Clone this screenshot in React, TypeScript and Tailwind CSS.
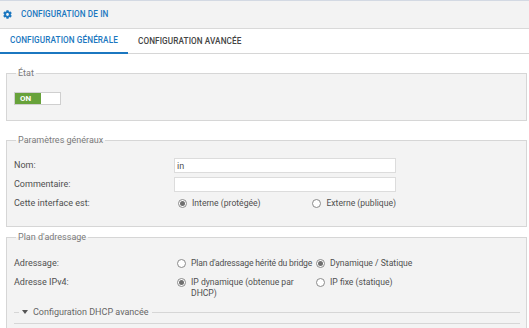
import React from 'react';
import { FaCog } from 'react-icons/fa';

const Radio: React.FC<{ checked?: boolean; label: React.ReactNode; wrap?: boolean; tight?: boolean }> = ({ checked, label, wrap, tight }) => (
  <label className="flex items-start gap-[5px]">
    <span className="mt-[1px] w-[9px] h-[9px] shrink-0 rounded-full border border-[#8a8a8a] bg-white flex items-center justify-center">
      {checked && <span className="w-[5px] h-[5px] rounded-full bg-[#6f6f6f]" />}
    </span>
    <span className={`text-[8.6px] leading-[11px] ${wrap ? '' : 'whitespace-nowrap'} ${tight ? 'tracking-[-0.17px]' : ''}`}>{label}</span>
  </label>
);

const Fieldset: React.FC<{ title: string; className?: string; children: React.ReactNode }> = ({ title, className, children }) => (
  <fieldset className={`ml-[6px] mr-[2px] border border-[#d6d6d6] bg-[#f3f3f3] px-[7px] ${className || ''}`}>
    <legend className="ml-[2px] px-[2px] text-[9px] leading-[11px] text-[#7a7a7a]">{title}</legend>
    {children}
  </fieldset>
);

export default function App() {
  return (
    <div className="w-[529px] h-[328px] overflow-hidden bg-white text-[9px] text-[#505050]" style={{ fontFamily: 'Roboto, "Liberation Sans", sans-serif' }}>
      {/* Header */}
      <div className="h-[29px] border-t border-[#d3d9e3] border-b border-b-[#d9d9d9] bg-[#f3f3f3] flex items-center pl-[3px]">
        <FaCog className="text-[#1b77c0] w-[9px] h-[9px]" />
        <span className="ml-[9px] text-[8.2px] font-medium text-[#1b77c0] tracking-[0.1px]">CONFIGURATION DE IN</span>
      </div>

      {/* Tabs */}
      <div className="h-[25px] flex border-b border-[#d6d6d6]">
        <div className="w-[128px] flex items-center pl-[10px] border-b-2 border-[#1b77c0] -mb-[1px] text-[8.2px] font-medium tracking-[0.1px] text-[#1b77c0]">
          CONFIGURATION GÉNÉRALE
        </div>
        <div className="flex items-center pl-[10px] text-[8.2px] font-medium tracking-[0.1px] text-[#444]">
          CONFIGURATION AVANCÉE
        </div>
      </div>

      {/* État */}
      <Fieldset title="État" className="mt-[14px] pb-[15px]">
        <div className="mt-[13px] flex w-[47px] h-[13px] border border-[#cfcfcf] bg-white">
          <div className="w-[26px] bg-[#67a23a] flex items-center pl-[5px] text-[8px] font-bold text-white leading-none">ON</div>
        </div>
      </Fieldset>

      {/* Paramètres généraux */}
      <Fieldset title="Paramètres généraux" className="mt-[14px] pb-[15px]">
        <div className="mt-[12px] grid grid-cols-[160px_222px] gap-y-[4px] items-center">
          <span>Nom:</span>
          <input
            defaultValue="in"
            className="h-[15px] border border-[#dcdcdc] bg-white px-[2px] text-[9px] text-[#505050] outline-none"
          />
          <span>Commentaire:</span>
          <input className="h-[15px] border border-[#dcdcdc] bg-white px-[2px] text-[9px] outline-none" />
          <span className="mt-[1px]">Cette interface est:</span>
          <div className="mt-[1px] flex pl-[4px]">
            <div className="w-[139px]">
              <Radio checked label="Interne (protégée)" />
            </div>
            <Radio label="Externe (publique)" />
          </div>
        </div>
      </Fieldset>

      {/* Plan d'adressage */}
      <Fieldset title="Plan d'adressage" className="mt-[5px] pb-[20px]">
        <div className="mt-[15px] grid grid-cols-[163px_139px_1fr] gap-y-[8px]">
          <span className="leading-[11px]">Adressage:</span>
          <Radio tight label="Plan d'adressage hérité du bridge" />
          <Radio checked label="Dynamique / Statique" />
          <span className="leading-[11px]">Adresse IPv4:</span>
          <div className="w-[125px]">
            <Radio checked wrap label="IP dynamique (obtenue par DHCP)" />
          </div>
          <Radio label="IP fixe (statique)" />
        </div>
        <fieldset className="mt-[8px] border-t border-b border-[#d6d6d6] h-[17px] mr-[-1px]">
          <legend className="ml-[5px] px-[3px] flex items-center gap-[5px] text-[9px] leading-[11px] text-[#666]">
            <svg width="6" height="4" viewBox="0 0 6 4" className="fill-[#555]">
              <path d="M0 0h6L3 4z" />
            </svg>
            Configuration DHCP avancée
          </legend>
        </fieldset>
      </Fieldset>
    </div>
  );
}
